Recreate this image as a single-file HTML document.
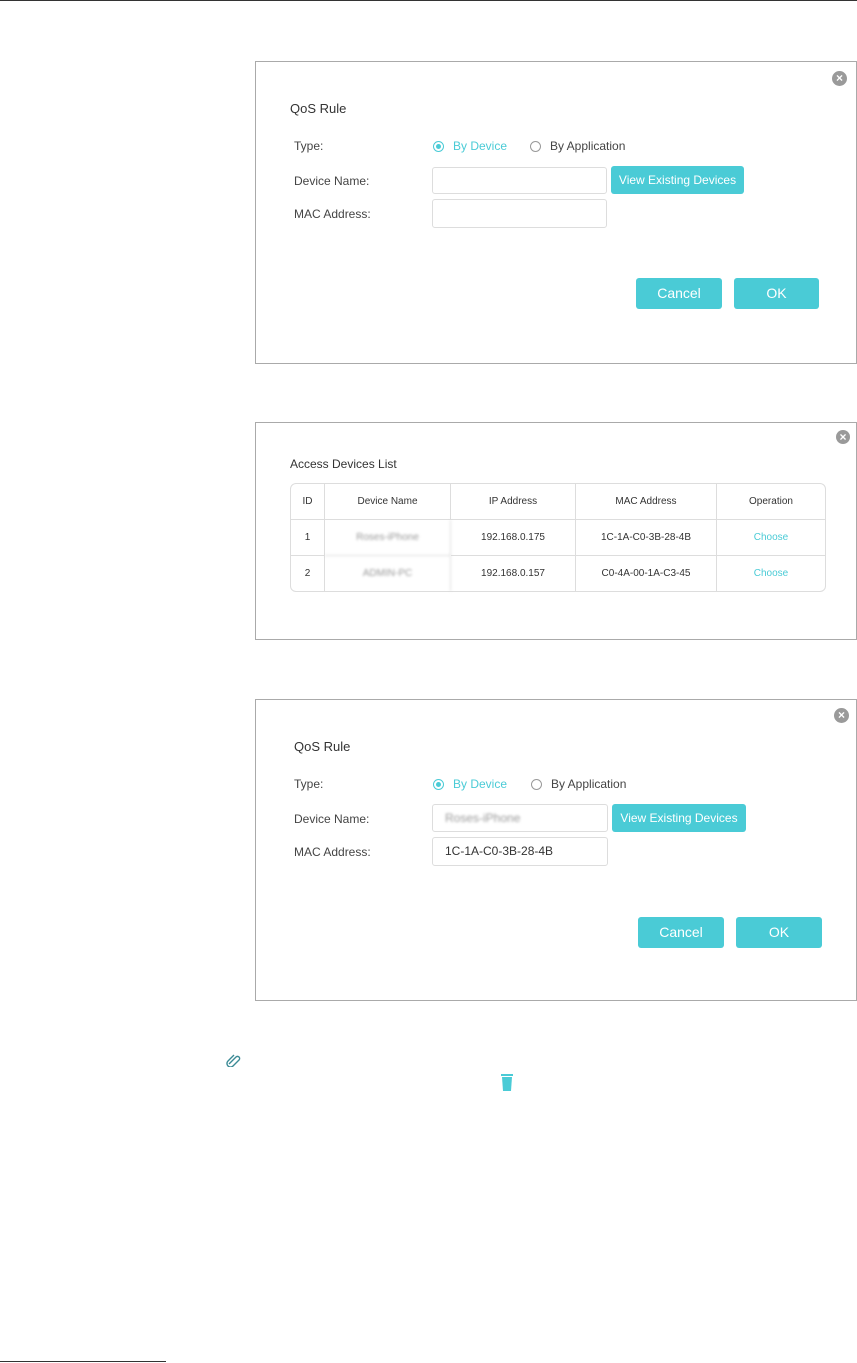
<!DOCTYPE html><html><head><style>
body{margin:0;width:857px;height:1363px;position:relative;background:#fff;font-family:"Liberation Sans",sans-serif;color:#333;overflow:hidden}
.a{position:absolute}
.p{position:absolute;left:255px;width:602px;border:1px solid #aaa;box-sizing:border-box}
.x{position:absolute;width:15px;height:15px;border-radius:50%;background:#9a9a9a;color:#fff;font-size:12px;line-height:15px;text-align:center;font-weight:bold}
.t{position:absolute;font-size:13px}
.l{position:absolute;font-size:12px;color:#444}
.in{position:absolute;border:1px solid #ddd;border-radius:3px;background:#fff;box-sizing:border-box;font-size:12px;padding-left:12px;line-height:26px}
.b{position:absolute;background:#4acbd6;color:#fff;border-radius:3px;text-align:center}
.r{position:absolute;width:9px;height:9px;border:1px solid #999;border-radius:50%}
.r.on{border-color:#4acbd6}.r.on:after{content:"";position:absolute;left:2px;top:2px;width:5px;height:5px;border-radius:50%;background:#4acbd6}
table{position:absolute;left:290px;top:483px;width:536px;border-collapse:separate;border-spacing:0;border:1px solid #ddd;border-radius:6px;font-size:10px;text-align:center}
td{border-right:1px solid #ddd;border-bottom:1px solid #ddd;height:35px;padding:0}
tr td:last-child{border-right:none}tr:last-child td{border-bottom:none}
.bl{color:#999;filter:blur(1.2px)}
</style></head><body>
<div class="a" style="left:0;top:0;width:857px;height:1px;background:#333"></div>
<div class="a" style="left:0;top:1361px;width:166px;height:1px;background:#333"></div>

<div class="p" style="top:61px;height:303px"></div>
<div class="x" style="left:832px;top:71px">×</div>
<div class="t" style="left:290px;top:101px">QoS Rule</div>
<div class="l" style="left:294px;top:139px">Type:</div>
<div class="r on" style="left:433px;top:141px"></div><div class="l" style="left:453px;top:139px;color:#4acbd6">By Device</div>
<div class="r" style="left:530px;top:141px"></div><div class="l" style="left:550px;top:139px">By Application</div>
<div class="l" style="left:294px;top:174px">Device Name:</div>
<div class="in" style="left:432px;top:167px;width:175px;height:27px"></div>
<div class="b" style="left:611px;top:166px;width:133px;height:28px;line-height:28px;font-size:12px">View Existing Devices</div>
<div class="l" style="left:294px;top:207px">MAC Address:</div>
<div class="in" style="left:432px;top:199px;width:175px;height:29px"></div>
<div class="b" style="left:636px;top:278px;width:86px;height:31px;line-height:31px;font-size:14px">Cancel</div>
<div class="b" style="left:734px;top:278px;width:85px;height:31px;line-height:31px;font-size:14px">OK</div>

<div class="p" style="top:422px;height:218px"></div>
<div class="x" style="left:836px;top:430px;width:14px;height:14px;line-height:14px">×</div>
<div class="l" style="left:290px;top:457px;color:#333">Access Devices List</div>
<table><tr><td style="width:33px">ID</td><td style="width:125px">Device Name</td><td style="width:124px">IP Address</td><td style="width:140px">MAC Address</td><td>Operation</td></tr>
<tr><td>1</td><td class="bl">Roses-iPhone</td><td>192.168.0.175</td><td>1C-1A-C0-3B-28-4B</td><td style="color:#4acbd6">Choose</td></tr>
<tr><td>2</td><td class="bl">ADMIN-PC</td><td>192.168.0.157</td><td>C0-4A-00-1A-C3-45</td><td style="color:#4acbd6">Choose</td></tr></table>

<div class="p" style="top:699px;height:302px"></div>
<div class="x" style="left:834px;top:708px">×</div>
<div class="t" style="left:294px;top:739px">QoS Rule</div>
<div class="l" style="left:294px;top:777px">Type:</div>
<div class="r on" style="left:433px;top:779px"></div><div class="l" style="left:453px;top:777px;color:#4acbd6">By Device</div>
<div class="r" style="left:531px;top:779px"></div><div class="l" style="left:551px;top:777px">By Application</div>
<div class="l" style="left:294px;top:812px">Device Name:</div>
<div class="in" style="left:432px;top:804px;width:176px;height:28px"><span class="bl">Roses-iPhone</span></div>
<div class="b" style="left:612px;top:804px;width:134px;height:28px;line-height:28px;font-size:12px">View Existing Devices</div>
<div class="l" style="left:294px;top:845px">MAC Address:</div>
<div class="in" style="left:432px;top:837px;width:176px;height:29px;color:#333">1C-1A-C0-3B-28-4B</div>
<div class="b" style="left:638px;top:917px;width:86px;height:31px;line-height:31px;font-size:14px">Cancel</div>
<div class="b" style="left:736px;top:917px;width:86px;height:31px;line-height:31px;font-size:14px">OK</div>

<svg class="a" style="left:226px;top:1053px" width="16" height="14" viewBox="0 0 16 14"><path d="M3 11 L10 4 a2 2 0 0 1 3 3 L7 13 a3.5 3.5 0 0 1 -5 -5 L8 2" fill="none" stroke="#3a8a95" stroke-width="1.4"/></svg>
<svg class="a" style="left:500px;top:1073px" width="14" height="19" viewBox="0 0 14 19"><rect x="1" y="1" width="12" height="2" fill="#4acbd6"/><path d="M2 4 H12 L11 18 H3 Z" fill="#4acbd6"/></svg>
</body></html>
